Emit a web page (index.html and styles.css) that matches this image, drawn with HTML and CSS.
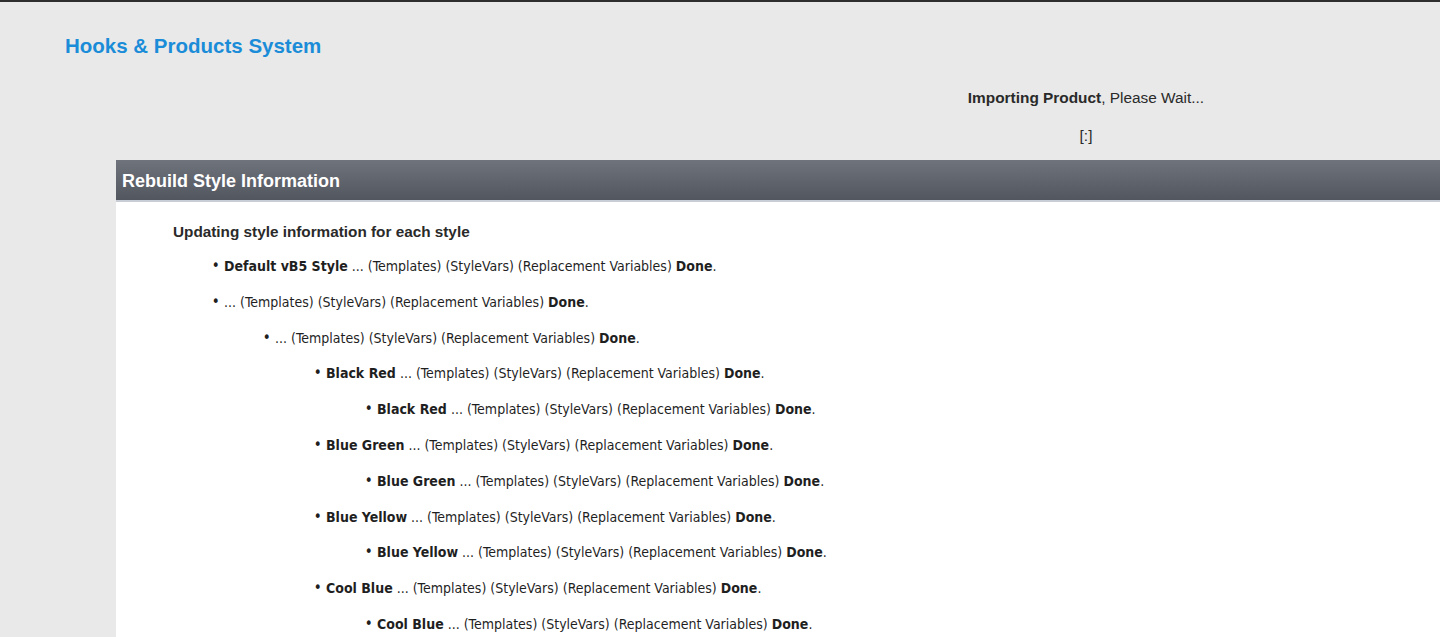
FILE: index.html
```html
<!DOCTYPE html>
<html>
<head>
<meta charset="utf-8">
<link rel="stylesheet" href="styles.css">
</head>
<body>
<div class="page">
  <h1 class="title">Hooks &amp; Products System</h1>
  <div class="status">
    <div class="status-box">
      <p class="status-line"><b>Importing Product</b>, Please Wait...</p>
      <p class="status-line">[:]</p>
    </div>
  </div>
  <div class="panel">
    <div class="panel-head">Rebuild Style Information</div>
    <div class="panel-body">
      <p class="subhead">Updating style information for each style</p>
      <ul class="styles top">
        <li><b>Default vB5 Style</b> ... (Templates) (StyleVars) (Replacement Variables) <b>Done</b>.</li>
        <li>... (Templates) (StyleVars) (Replacement Variables) <b>Done</b>.
          <ul class="styles">
            <li>... (Templates) (StyleVars) (Replacement Variables) <b>Done</b>.
              <ul class="styles">
                <li><b>Black Red</b> ... (Templates) (StyleVars) (Replacement Variables) <b>Done</b>.
                  <ul class="styles">
                    <li><b>Black Red</b> ... (Templates) (StyleVars) (Replacement Variables) <b>Done</b>.</li>
                  </ul>
                </li>
                <li><b>Blue Green</b> ... (Templates) (StyleVars) (Replacement Variables) <b>Done</b>.
                  <ul class="styles">
                    <li><b>Blue Green</b> ... (Templates) (StyleVars) (Replacement Variables) <b>Done</b>.</li>
                  </ul>
                </li>
                <li><b>Blue Yellow</b> ... (Templates) (StyleVars) (Replacement Variables) <b>Done</b>.
                  <ul class="styles">
                    <li><b>Blue Yellow</b> ... (Templates) (StyleVars) (Replacement Variables) <b>Done</b>.</li>
                  </ul>
                </li>
                <li><b>Cool Blue</b> ... (Templates) (StyleVars) (Replacement Variables) <b>Done</b>.
                  <ul class="styles">
                    <li><b>Cool Blue</b> ... (Templates) (StyleVars) (Replacement Variables) <b>Done</b>.</li>
                  </ul>
                </li>
              </ul>
            </li>
          </ul>
        </li>
      </ul>
    </div>
  </div>
</div>
</body>
</html>
```
FILE: styles.css
```css
html, body {
  margin: 0;
  padding: 0;
  background: #e9e9e9;
}
body {
  font-family: "Liberation Sans", Arial, sans-serif;
  color: #2a2a2a;
  border-top: 2px solid #2e2e2e;
  overflow: hidden;
  height: 635px;
}
.title {
  margin: 0;
  padding: 32px 0 0 65px;
  font-size: 20.5px;
  line-height: 24px;
  font-weight: bold;
  color: #1a8cd8;
}
.status {
  display: flex;
  justify-content: flex-end;
  padding-top: 31px;
}
.status-box {
  width: 708px;
  text-align: center;
  font-size: 15.4px;
  line-height: 18px;
}
.status-line {
  margin: 0 0 20px 0;
}
.status-line + .status-line {
  margin-bottom: 0;
}
.panel {
  margin: 15px 0 0 116px;
  background: #fff;
  min-height: 500px;
}
.panel-head {
  background: linear-gradient(#6f737c, #52565e);
  border-bottom: 2px solid #c9ced6;
  color: #fff;
  font-weight: bold;
  font-size: 18px;
  line-height: 42px;
  height: 40px;
  padding-left: 6px;
}
.panel-body {
  padding: 21px 0 0 57px;
}
.subhead {
  margin: 0;
  font-size: 15.3px;
  line-height: 18px;
  font-weight: bold;
}
.styles {
  margin: 0;
  padding-left: 51px;
  list-style: disc;
  font-family: "DejaVu Sans Condensed", "DejaVu Sans", sans-serif;
  font-size: 14px;
  line-height: 18px;
  color: #1f1f1f;
}
.styles li::marker {
  content: "\2022\00a0";
  font-size: 15px;
}
.styles.top {
  margin-top: 16px;
}
.styles li {
  margin-top: 17.8px;
}
.styles.top > li:first-child {
  margin-top: 0;
}
```
